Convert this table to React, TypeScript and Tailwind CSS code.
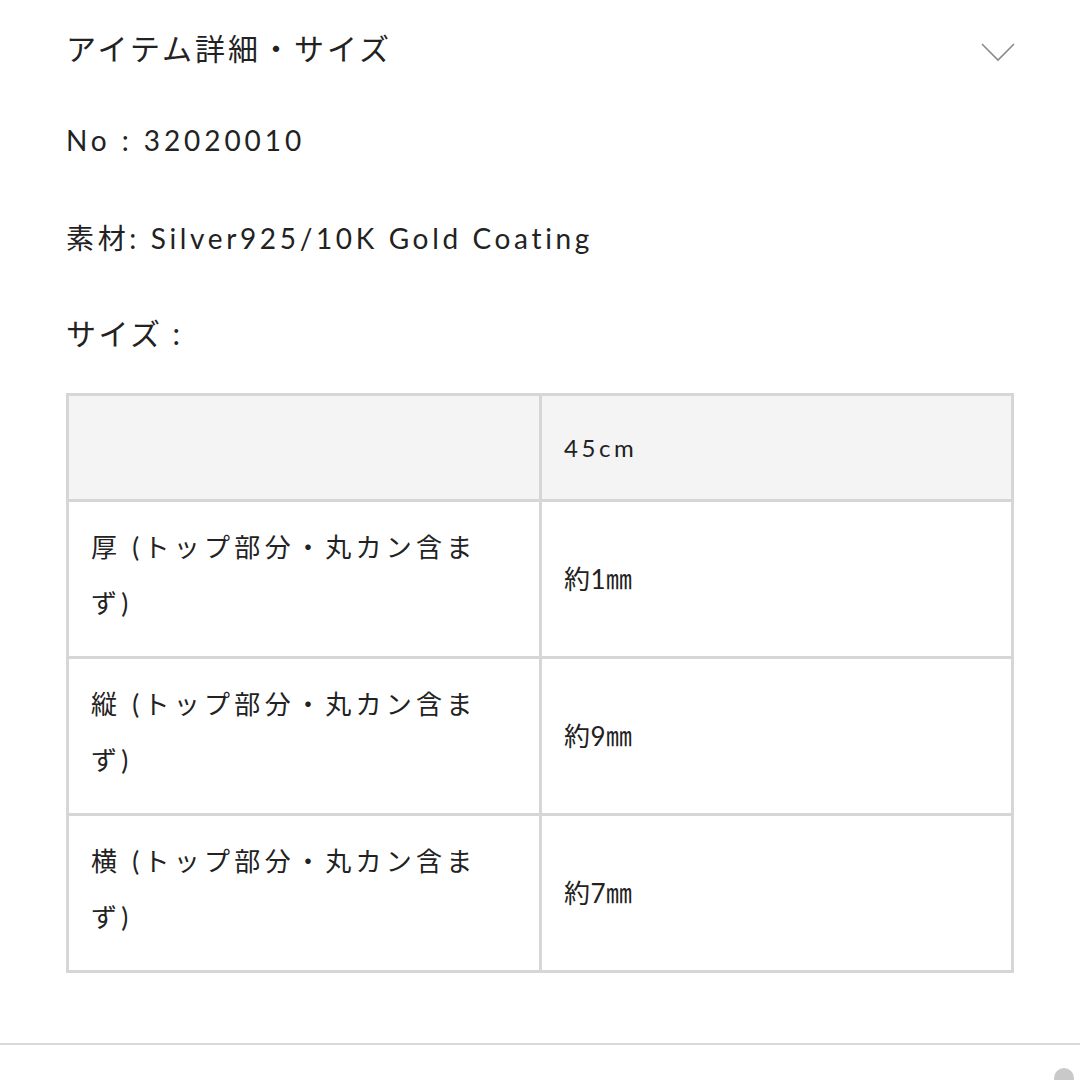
const rows = [
  { label: "厚 (トップ部分・丸カン含まず)", value: "約1㎜" },
  { label: "縦 (トップ部分・丸カン含まず)", value: "約9㎜" },
  { label: "横 (トップ部分・丸カン含まず)", value: "約7㎜" },
];

export default function App() {
  return (
    <div
      className="relative min-h-[1080px] w-[1080px] overflow-hidden bg-white text-[#222]"
      style={{ fontFamily: '"Lato", "Noto Sans CJK JP", sans-serif' }}
    >
      <div className="px-[66px]">
        {/* Accordion header */}
        <div className="flex items-center justify-between pt-[30px]">
          <h2 className="text-[30px] leading-[36px] tracking-[0.1em] font-normal">
            アイテム詳細・サイズ
          </h2>
          <svg width="36" height="22" viewBox="0 0 36 22" className="mr-[-2px] mt-[8px]">
            <path d="M2 3 L18 19 L34 3" fill="none" stroke="#8a8a8a" strokeWidth="1.6" />
          </svg>
        </div>

        <p className="mt-[56px] text-[28px] leading-[36px] tracking-[0.14em]">No : 32020010</p>
        <p className="mt-[62px] text-[28px] leading-[36px] tracking-[0.13em]">
          素材: Silver925/10K Gold Coating
        </p>
        <p className="mt-[59px] text-[30px] leading-[36px] tracking-[0.08em]">サイズ :</p>

        {/* Size table */}
        <table className="mt-[42px] w-[948px] table-fixed border-collapse border-[3px] border-[#d6d6d6]">
          <tbody>
            <tr className="h-[106px] bg-[#f4f4f4]">
              <td className="w-[473px] border-[3px] border-[#d6d6d6]" />
              <td className="border-[3px] border-[#d6d6d6] pl-[22px] text-[24px] tracking-[0.15em]">
                45cm
              </td>
            </tr>
            {rows.map((r) => (
              <tr key={r.label} className="h-[157px]">
                <td className="border-[3px] border-[#d6d6d6] pb-[8px] pl-[22px] pr-[40px] text-[26px] leading-[56px] tracking-[0.165em]">
                  {r.label}
                </td>
                <td className="border-[3px] border-[#d6d6d6] pl-[22px] text-[26px] tracking-[0.02em]">
                  {r.value}
                </td>
              </tr>
            ))}
          </tbody>
        </table>
      </div>

      <div className="mt-[70px] h-[2px] w-full bg-[#d9d9d9]" />

      {/* scroll-top button peeking in */}
      <div className="absolute right-[6px] top-[1068px] h-[20px] w-[20px] rounded-full bg-[#c9c9c9]" />
    </div>
  );
}
